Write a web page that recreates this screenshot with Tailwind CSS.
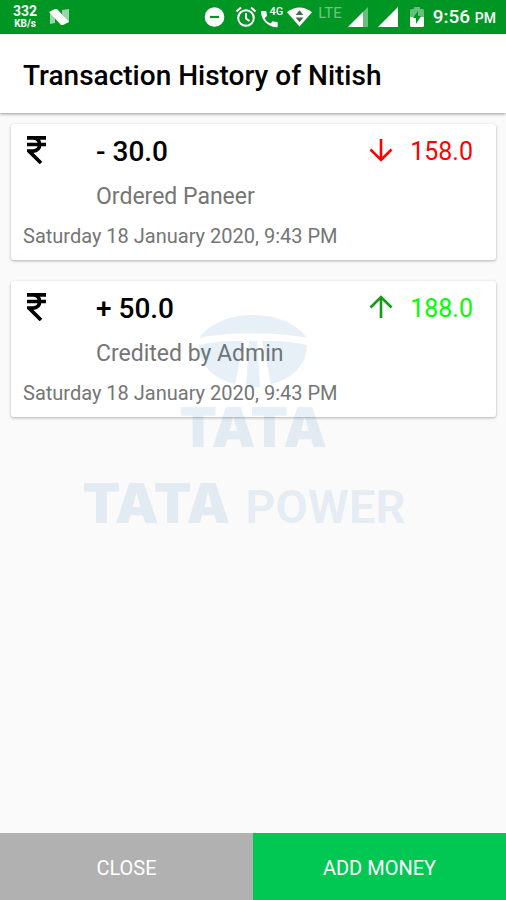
<!DOCTYPE html>
<html lang="en">
<head>
<meta charset="utf-8">
<meta name="viewport" content="width=device-width, initial-scale=1">
<title>Transaction History</title>
<script src="https://cdn.jsdelivr.net/npm/@tailwindcss/browser@4"></script>
</head>
<body class="relative flex min-h-screen flex-col bg-[#fafafa] font-['Roboto',sans-serif] text-black">

<!-- Status bar -->
<div class="flex h-[34px] items-center justify-between bg-[#009624] pr-[10px] pl-[13px] text-white">
  <div class="flex items-center gap-3">
    <div class="flex w-6 flex-col text-center font-bold">
      <span class="text-[14px] leading-[14px]">332</span>
      <span class="text-[10px] leading-3">KB/s</span>
    </div>
    <svg class="h-4 w-5" viewBox="0 0 20 16" fill="#fff" aria-hidden="true">
      <path d="M1 4l5 3v7l-5 1z" opacity=".6"/>
      <path d="M13 1l7-1v13l-5 1-2-5z" opacity=".6"/>
      <path d="M0 3L6 0h2L20 13l-6 3h-2L1 4z"/>
    </svg>
  </div>
  <div class="flex items-center">
    <svg class="h-5 w-[21px]" viewBox="0 0 21 20" aria-hidden="true"><circle cx="10.500" cy="10" r="9.800" fill="#fff"/><path d="M6 10h9" stroke="#009624" stroke-width="2.200"/></svg>
    <svg class="ml-[10px] h-[22px] w-[22px]" viewBox="0 0 22 22" fill="none" stroke="#fff" stroke-width="2" aria-hidden="true"><circle cx="11" cy="12" r="7.800"/><path d="M11 7v5.500l3.500 2.500M1.500 5.500l4.500-4M20.500 5.500l-4.500-4"/></svg>
    <div class="relative ml-[3px] h-[22px] w-[23px]">
      <svg class="h-[22px] w-[23px]" viewBox="0 0 23 22" fill="#fff" aria-hidden="true"><path d="M2 5h3.500c.6 0 1 .4 1 1 0 1.200.2 2.300.5 3.300.1.400 0 .8-.3 1l-2 2c1.300 2.500 3.400 4.200 5.800 5.200l1.900-1.900c.3-.3.700-.4 1-.2 1 .3 2.100.5 3.300.5.600 0 1 .4 1 1v3.400c0 .6-.4 1-1 1C8.500 21.300 1 14.200 1 6c0-.6.400-1 1-1z"/></svg>
      <span class="absolute top-0 right-0 text-[11px] leading-[12px] font-medium">4G</span>
    </div>
    <svg class="ml-1 h-5 w-[25px]" viewBox="0 0 26 20" aria-hidden="true"><path d="M0 5C8-1.500 18-1.500 26 5L13 20z" fill="#fff"/><path d="M9 8l4-5 4 5zM9 10.500h8l-4 5z" fill="#456b4c"/></svg>
    <span class="ml-[6px] pb-2 text-[15px] leading-4 text-white/45">LTE</span>
    <svg class="ml-[6px] h-5 w-5" viewBox="0 0 20 20" aria-hidden="true"><path d="M0 20L20 0v20z" fill="#fff" opacity=".4"/><path d="M0 20L15 5v15z" fill="#fff"/></svg>
    <svg class="ml-[10px] h-5 w-5" viewBox="0 0 20 20" aria-hidden="true"><path d="M0 20L20 0v20z" fill="#fff"/></svg>
    <svg class="ml-3 h-5 w-[14px]" viewBox="0 0 14 20" aria-hidden="true"><path d="M4 0h6v2h2.500q1.500 0 1.500 1.500V11H0V3.500Q0 2 1.500 2H4z" fill="#fff" opacity=".4"/><path d="M0 10h14v8.500q0 1.500-1.500 1.500h-11Q0 20 0 18.500z" fill="#fff"/><path d="M8 4v5h3l-5 8v-6H3z" fill="#009624"/></svg>
    <span class="ml-[9px] text-[19px] leading-5 font-medium">9:56 <span class="text-[14px]">PM</span></span>
  </div>
</div>

<header class="flex h-[79px] items-center bg-white px-[23px] pt-1 shadow-[0_1px_3px_rgba(0,0,0,0.4)]">
  <h1 class="text-[28px] leading-8 font-medium">Transaction History of Nitish</h1>
</header>

<main class="flex grow flex-col gap-[21px] px-[11px] pt-[11px] pr-[10px]">
  <article class="rounded-[3px] bg-white px-3 pt-[6px] pb-3 shadow-[0_1px_3px_rgba(0,0,0,0.3)]">
    <div class="flex h-11 items-center">
      <svg class="mb-[5px] ml-[4px] h-7 w-[19px]" viewBox="0 0 19 28" fill="none" stroke="#000" stroke-width="3.600" role="img" aria-label="Rupees"><path d="M0 1.900h19M0 8.500h19M1 1.900h5c9 0 9 13.200 0 13.200H2L14 27"/></svg>
      <span class="ml-[50px] grow text-[28px] leading-8 font-medium">- 30.0</span>
      <svg class="mb-1 h-6 w-6" viewBox="0 0 24 24" fill="none" stroke="#f00" stroke-width="2.600" aria-hidden="true"><path d="M12 1v20M1.500 11.500L12 22l10.500-10.500"/></svg>
      <span class="mr-[11px] ml-[17px] text-[25px] leading-8 text-[#f00]">158.0</span>
    </div>
    <p class="pl-[73px] text-[23px] leading-[46px] text-[#757575]">Ordered Paneer</p>
    <p class="pt-1 text-[20px] leading-6 text-[#757575]">Saturday 18 January 2020, 9:43 PM</p>
  </article>

  <article class="rounded-[3px] bg-white px-3 pt-[6px] pb-3 shadow-[0_1px_3px_rgba(0,0,0,0.3)]">
    <div class="flex h-11 items-center">
      <svg class="mb-[5px] ml-[4px] h-7 w-[19px]" viewBox="0 0 19 28" fill="none" stroke="#000" stroke-width="3.600" role="img" aria-label="Rupees"><path d="M0 1.900h19M0 8.500h19M1 1.900h5c9 0 9 13.200 0 13.200H2L14 27"/></svg>
      <span class="ml-[50px] grow text-[28px] leading-8 font-medium">+ 50.0</span>
      <svg class="mb-1 h-6 w-6" viewBox="0 0 24 24" fill="none" stroke="#159a15" stroke-width="2.600" aria-hidden="true"><path d="M12 23V3M1.500 12.500L12 2l10.500 10.500"/></svg>
      <span class="mr-[11px] ml-[17px] text-[25px] leading-8 text-[#0f0]">188.0</span>
    </div>
    <p class="pl-[73px] text-[23px] leading-[46px] text-[#757575]">Credited by Admin</p>
    <p class="pt-1 text-[20px] leading-6 text-[#757575]">Saturday 18 January 2020, 9:43 PM</p>
  </article>
</main>

<!-- Watermark over the list -->
<div class="pointer-events-none absolute inset-x-0 top-[315px] flex flex-col items-center text-[#1f6fb5]/10">
  <svg class="h-[76px] w-[110px]" viewBox="0 0 110 76" fill="currentColor" aria-hidden="true">
    <path d="M1 23C12 8 32 0 55 0s43 8 54 23C94 20 80 18.500 65 18.500H45C30 18.500 16 20 1 23z"/>
    <path d="M1 30C14 27 28 25.500 46 26L37 69C15 64 1 50 1 30z"/>
    <path d="M109 30C96 27 82 25.500 64 26L73 69c21-5 36-19 36-39z"/>
    <path d="M51 26h8l3 46q-7 1-14 0z"/>
  </svg>
  <span class="mt-[18px] font-['Inter'] text-[55px] leading-[36px] font-black">TATA</span>
  <div class="mt-[32px] mr-[18px] flex items-baseline gap-[15px] leading-[52px]">
    <span class="font-['Inter'] text-[55px] font-black">TATA</span>
    <span class="text-[47px] font-bold">POWER</span>
  </div>
</div>

<footer class="grid h-[67px] grid-cols-2 text-[20px] text-white">
  <button type="button" class="bg-[#b1b1b1] pt-[2px]">CLOSE</button>
  <button type="button" class="bg-[#00c853] pt-[2px]">ADD MONEY</button>
</footer>
</body>
</html>
